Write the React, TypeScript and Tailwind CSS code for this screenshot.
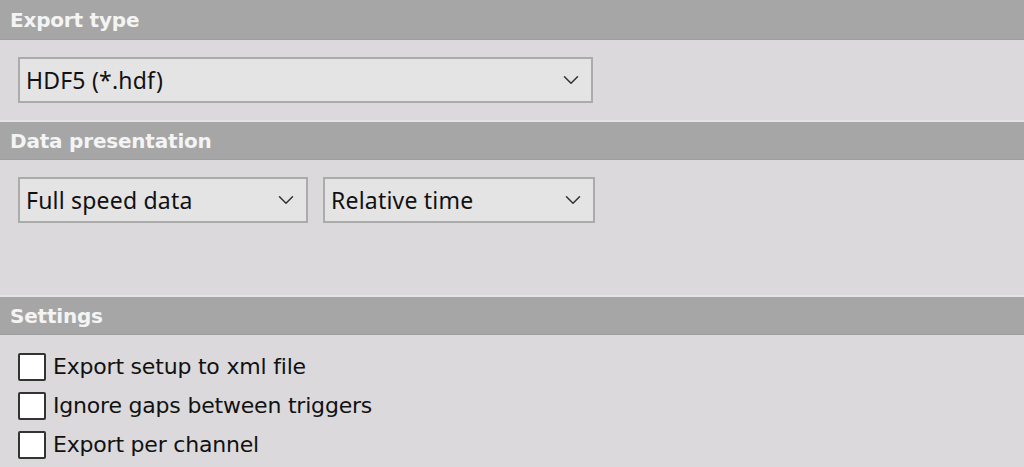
import { ChevronDown } from 'lucide-react'

function Header({ title, first = false }: { title: string; first?: boolean }) {
  return (
    <div
      className={
        first
          ? 'h-[40px] bg-[#a6a6a6] border-b border-b-[#9e9e9e] flex items-center pl-[10px]'
          : 'h-[40px] bg-[#a6a6a6] border-t-2 border-b border-t-[#e4e4e4] border-b-[#9e9e9e] flex items-center pl-[10px]'
      }
    >
      <span className="text-[20px] font-bold text-[#f4f4f4] font-['DejaVu_Sans',sans-serif] tracking-[-0.2px]">
        {title}
      </span>
    </div>
  )
}

function Select({ value, width }: { value: string; width: string }) {
  return (
    <div
      className={`${width} h-[46px] bg-[#e4e4e4] border-2 border-[#ababab] flex items-center justify-between pl-[6px] pr-[7px]`}
    >
      <span className="text-[23px] text-[#111] font-['Noto_Sans',sans-serif] tracking-[0.2px]">{value}</span>
      <ChevronDown className="w-[26px] h-[26px] text-[#333]" strokeWidth={1.4} />
    </div>
  )
}

function Check({ label }: { label: string }) {
  return (
    <label className="flex items-center gap-[7px] h-[39px]">
      <span className="w-[28px] h-[28px] bg-white border-2 border-[#333] rounded-[2px]" />
      <span className="text-[22px] text-[#111] font-['DejaVu_Sans',sans-serif] tracking-[-0.2px]">{label}</span>
    </label>
  )
}

export default function App() {
  return (
    <div className="w-[1024px] h-[467px] bg-[#dbd9db] overflow-hidden">
      <Header title="Export type" first />
      <div className="h-[80px] pt-[17px] pl-[18px]">
        <Select value="HDF5 (*.hdf)" width="w-[575px]" />
      </div>
      <Header title="Data presentation" />
      <div className="h-[135px] pt-[17px] pl-[18px] flex gap-[15px]">
        <Select value="Full speed data" width="w-[290px]" />
        <Select value="Relative time" width="w-[272px]" />
      </div>
      <Header title="Settings" />
      <div className="pt-[12px] pl-[18px] flex flex-col">
        <Check label="Export setup to xml file" />
        <Check label="Ignore gaps between triggers" />
        <Check label="Export per channel" />
      </div>
    </div>
  )
}
